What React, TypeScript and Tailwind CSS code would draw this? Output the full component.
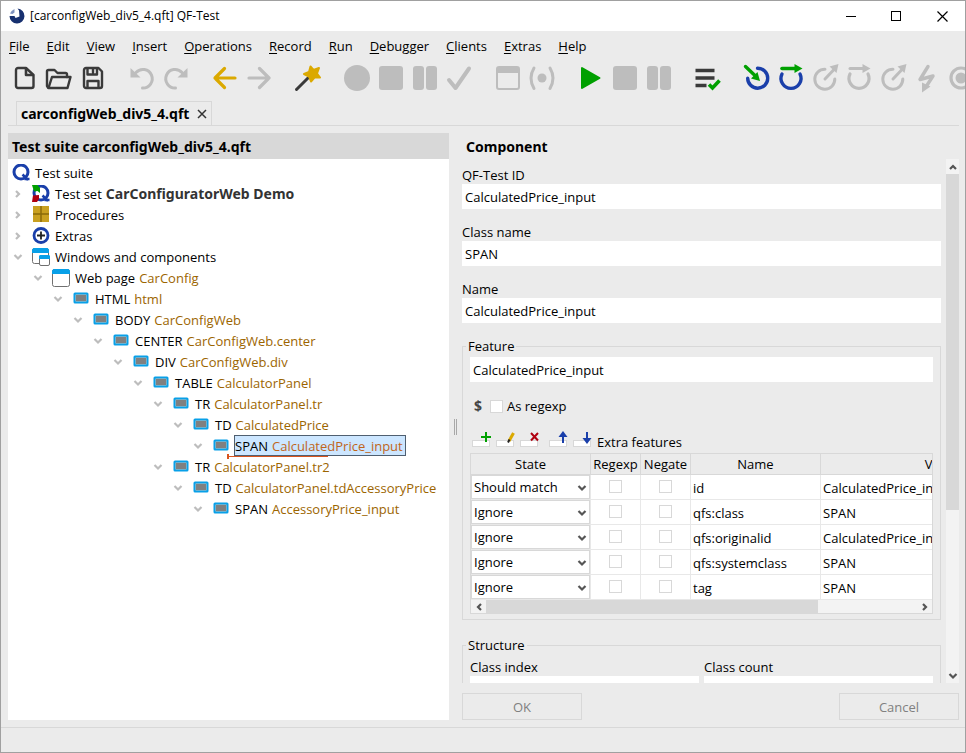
import { useState, type ReactNode } from 'react';

type NodeIcon = 'suite' | 'testset' | 'procedures' | 'extras' | 'windows' | 'page' | 'component';

interface TreeNode {
  level: number;
  icon: NodeIcon;
  label: string;
  detail?: string;
  open?: boolean;
}

const menus = ['File', 'Edit', 'View', 'Insert', 'Operations', 'Record', 'Run', 'Debugger', 'Clients', 'Extras', 'Help'];

const tree: TreeNode[] = [
  { level: 0, icon: 'suite', label: 'Test suite' },
  { level: 1, icon: 'testset', label: 'Test set', detail: 'CarConfiguratorWeb Demo', open: false },
  { level: 1, icon: 'procedures', label: 'Procedures', open: false },
  { level: 1, icon: 'extras', label: 'Extras', open: false },
  { level: 1, icon: 'windows', label: 'Windows and components', open: true },
  { level: 2, icon: 'page', label: 'Web page', detail: 'CarConfig', open: true },
  { level: 3, icon: 'component', label: 'HTML', detail: 'html', open: true },
  { level: 4, icon: 'component', label: 'BODY', detail: 'CarConfigWeb', open: true },
  { level: 5, icon: 'component', label: 'CENTER', detail: 'CarConfigWeb.center', open: true },
  { level: 6, icon: 'component', label: 'DIV', detail: 'CarConfigWeb.div', open: true },
  { level: 7, icon: 'component', label: 'TABLE', detail: 'CalculatorPanel', open: true },
  { level: 8, icon: 'component', label: 'TR', detail: 'CalculatorPanel.tr', open: true },
  { level: 9, icon: 'component', label: 'TD', detail: 'CalculatedPrice', open: true },
  { level: 10, icon: 'component', label: 'SPAN', detail: 'CalculatedPrice_input', open: true },
  { level: 8, icon: 'component', label: 'TR', detail: 'CalculatorPanel.tr2', open: true },
  { level: 9, icon: 'component', label: 'TD', detail: 'CalculatorPanel.tdAccessoryPrice', open: true },
  { level: 10, icon: 'component', label: 'SPAN', detail: 'AccessoryPrice_input', open: true },
];

const features = [
  { state: 'Should match', name: 'id', value: 'CalculatedPrice_input' },
  { state: 'Ignore', name: 'qfs:class', value: 'SPAN' },
  { state: 'Ignore', name: 'qfs:originalid', value: 'CalculatedPrice_input' },
  { state: 'Ignore', name: 'qfs:systemclass', value: 'SPAN' },
  { state: 'Ignore', name: 'tag', value: 'SPAN' },
];

const GRAY = '#bdbdbd';
const DARK = '#3a3a3a';
const GOLD = '#dba900';
const GREEN = '#00a000';
const BLUE = '#1a3faa';

const line = (color: string, width: number) => ({
  fill: 'none',
  stroke: color,
  strokeWidth: width,
  strokeLinecap: 'round' as const,
  strokeLinejoin: 'round' as const,
});

const stopIcon = <rect x="2" y="2" width="24" height="24" rx="3" fill={GRAY} />;
const pauseIcon = (
  <g fill={GRAY}>
    <rect x="2" y="2" width="11" height="24" rx="3" />
    <rect x="15" y="2" width="11" height="24" rx="3" />
  </g>
);
const stepOutIcon = (
  <g>
    <path d="M14 5.2a10 10 0 1 0 9.800 9.800" {...line(GRAY, 3)} />
    <path d="M14 15L23 5.500" {...line(GRAY, 3)} />
    <path d="M27.500 0L25.500 9L18.500 2.500Z" fill={GRAY} />
  </g>
);

const toolbar: { name: string; icon: ReactNode }[][] = [
  [
    {
      name: 'New',
      icon: (
        <g {...line(DARK, 2.4)}>
          <path d="M7 4h8l7.500 7V22a2 2 0 0 1-2 2H7a2 2 0 0 1-2-2V6a2 2 0 0 1 2-2z" />
          <path d="M15 4.500V11H22" strokeWidth="2.600" />
        </g>
      ),
    },
    {
      name: 'Open',
      icon: (
        <g {...line(DARK, 2.4)}>
          <path d="M3 23.500L2 22V7.500a1.500 1.500 0 0 1 1.500-1.500h6l3 3h8a1.500 1.500 0 0 1 1.500 1.500V13" />
          <path d="M7 13h18.500l-3 11H3.500z" />
        </g>
      ),
    },
    {
      name: 'Save',
      icon: (
        <g {...line(DARK, 2.4)}>
          <path d="M7 4h12.500l3.500 3.500V22a2 2 0 0 1-2 2H7a2 2 0 0 1-2-2V6a2 2 0 0 1 2-2z" />
          <path d="M8.500 4.500v6h9.500V4.500M14 4.500v4M8.500 23.500v-6.500h11v6.500" />
        </g>
      ),
    },
  ],
  [
    {
      name: 'Undo',
      icon: (
        <g>
          <path d="M8 8.500A9.300 9.300 0 1 1 14.500 24" {...line(GRAY, 3)} />
          <path d="M2.500 4V13.500H12.500Z" fill={GRAY} />
        </g>
      ),
    },
    {
      name: 'Redo',
      icon: (
        <g>
          <path d="M20 8.500A9.300 9.300 0 1 0 13.500 24" {...line(GRAY, 3)} />
          <path d="M25.500 4V13.500H15.500Z" fill={GRAY} />
        </g>
      ),
    },
  ],
  [
    { name: 'Back', icon: <path d="M24 14H4M13.500 4.500L4 14L13.500 23.500" {...line(GOLD, 3.2)} /> },
    { name: 'Forward', icon: <path d="M4 14H24M14.500 4.500L24 14L14.500 23.500" {...line(GRAY, 3.2)} /> },
  ],
  [
    {
      name: 'Wizard',
      icon: (
        <g>
          <path d="M2.500 25.500L14 14" {...line(DARK, 3)} />
          <path
            d="M16.500 2.500L19.500 6L25 4L23 9.500L26 13.500L20.500 13.500L17 17.500L15 12.500L10 10L15 8Z"
            fill={GOLD}
            stroke={GOLD}
            strokeWidth="2"
            strokeLinejoin="round"
          />
        </g>
      ),
    },
  ],
  [
    { name: 'Record', icon: <circle cx="14" cy="14" r="13" fill={GRAY} /> },
    { name: 'Stop recording', icon: stopIcon },
    { name: 'Pause recording', icon: pauseIcon },
    { name: 'Check', icon: <path d="M4 16L10.500 24L24 4.500" {...line(GRAY, 4)} /> },
  ],
  [
    {
      name: 'Record window',
      icon: (
        <g>
          <rect x="3" y="3" width="22" height="22" rx="2" fill="none" stroke={GRAY} strokeWidth="2" />
          <path d="M3 3h22v6H3z" fill={GRAY} />
        </g>
      ),
    },
    {
      name: 'Record component',
      icon: (
        <g>
          <circle cx="14" cy="14" r="4.500" fill={GRAY} />
          <path d="M6 4Q0 14 6 24.500M22 4Q28 14 22 24.500" {...line(GRAY, 3)} />
        </g>
      ),
    },
  ],
  [
    { name: 'Run', icon: <path d="M5 4v20L22.500 14z" fill={GREEN} stroke={GREEN} strokeWidth="2" strokeLinejoin="round" /> },
    { name: 'Stop run', icon: stopIcon },
    { name: 'Pause run', icon: pauseIcon },
  ],
  [
    {
      name: 'Run log',
      icon: (
        <g>
          <path d="M1.500 6.500h19M1.500 14h19M1.500 21.500h11" fill="none" stroke={DARK} strokeWidth="3.400" />
          <path d="M15 20.500L18.500 24L25.500 16.500" fill="none" stroke={GREEN} strokeWidth="3.600" />
        </g>
      ),
    },
  ],
  [
    {
      name: 'Step into',
      icon: (
        <g>
          <path d="M14.500 4.200a10 10 0 1 1-9.800 10" {...line(BLUE, 3.4)} />
          <path d="M2.500 2.500L13 12.500" {...line(GREEN, 3.4)} />
          <path d="M17 17L8 14.500L14.500 8Z" fill={GREEN} />
        </g>
      ),
    },
    {
      name: 'Step over',
      icon: (
        <g>
          <path d="M5 10a10 10 0 1 0 18 0" {...line(BLUE, 3.4)} />
          <path d="M5 4.500H18" {...line(GREEN, 3.6)} />
          <path d="M25.500 4.500L17.500 0V9Z" fill={GREEN} />
        </g>
      ),
    },
    { name: 'Step out', icon: stepOutIcon },
    {
      name: 'Skip over',
      icon: (
        <g>
          <path d="M5 10a10 10 0 1 0 18 0" {...line(GRAY, 3.2)} />
          <path d="M5 4.500H18" {...line(GRAY, 3)} />
          <path d="M25.500 4.500L17.500 0V9Z" fill={GRAY} />
        </g>
      ),
    },
    { name: 'Skip out', icon: stepOutIcon },
    {
      name: 'Break on exception',
      icon: (
        <g>
          <path d="M15 2.500L7 15.500L20 12L13.500 22" {...line(GRAY, 3.4)} />
          <path d="M9 28.500L9 18.500L17.500 22.500Z" fill={GRAY} />
        </g>
      ),
    },
    {
      name: 'Breakpoint',
      icon: (
        <g>
          <circle cx="14" cy="14" r="10" fill="none" stroke={GRAY} strokeWidth="3.200" />
          <circle cx="14" cy="14" r="5.500" fill={GRAY} />
        </g>
      ),
    },
  ],
];

function TreeIcon({ icon }: { icon: NodeIcon }) {
  if (icon === 'component') {
    return (
      <svg width="18" height="18" viewBox="0 0 18 18">
        <rect x="2.500" y="3.500" width="13" height="9" rx=".5" fill="#c9c4bf" stroke="#08a0e8" strokeWidth="2" />
        <rect x="4" y="5" width="10" height="6" fill="#808080" />
      </svg>
    );
  }
  if (icon === 'page') {
    return (
      <svg width="18" height="18" viewBox="0 0 18 18">
        <rect x=".5" y=".5" width="17" height="17" rx="2" fill="#fff" stroke="#707070" />
        <path d="M0 5V1.500L1.500 0h15L18 1.500V5z" fill="#08a0e8" />
      </svg>
    );
  }
  if (icon === 'windows') {
    return (
      <svg width="18" height="18" viewBox="0 0 18 18">
        <rect x=".5" y=".5" width="16" height="15" rx="2" fill="#fff" stroke="#707070" />
        <path d="M0 5V1.500L1.500 0h14L17 1.500V5z" fill="#08a0e8" />
        <rect x="7.500" y="7.500" width="10" height="10" rx="1.500" fill="#fff" stroke="#707070" />
        <path d="M7 11V8l1-1h9l1 1v3z" fill="#08a0e8" />
      </svg>
    );
  }
  if (icon === 'procedures') {
    return (
      <svg width="18" height="18" viewBox="0 0 18 18">
        <rect x="1" y="0" width="16" height="16" fill="#c9a020" />
        <path d="M9 0V16M1 8H17" stroke="#8a6a08" strokeWidth="1.500" />
      </svg>
    );
  }
  if (icon === 'extras') {
    return (
      <svg width="18" height="18" viewBox="0 0 18 18">
        <circle cx="9" cy="8.500" r="7" fill="#fff" stroke={BLUE} strokeWidth="2.800" />
        <path d="M9 4.500V12.500M5 8.500H13" stroke="#222" strokeWidth="1.800" />
      </svg>
    );
  }
  return (
    <svg width="18" height="18" viewBox="0 0 18 18">
      <circle cx="9" cy="8" r="7" fill="none" stroke={BLUE} strokeWidth="3" />
      <path d="M10.500 10.500L16 16M12.500 15h5" stroke={BLUE} strokeWidth="2.500" />
      {icon === 'testset' && (
        <g>
          <path d="M0 0h5.500L8 3v5L5.500 6L2 6.500Z" fill={GREEN} />
          <path d="M1 10.500L7 10V14L5 17H0Z" fill="#b00010" />
        </g>
      )}
    </svg>
  );
}

function Arrow({ dir, className }: { dir: 'up' | 'down' | 'left' | 'right'; className?: string }) {
  const paths = {
    up: 'M2 7L5 4L8 7',
    down: 'M1.500 3L5 6.500L8.500 3',
    left: 'M7 2L4 5L7 8',
    right: 'M3 2L6 5L3 8',
  };
  return (
    <svg width="10" height="10" viewBox="0 0 10 10" className={className}>
      <path d={paths[dir]} fill="none" stroke="currentColor" strokeWidth="2.200" />
    </svg>
  );
}

function TitleBar() {
  return (
    <header className="flex h-[30px] shrink-0 items-center bg-white pl-2">
      <svg width="16" height="16" viewBox="0 0 16 16">
        <path d="M8.500 0.500A7.500 7.500 0 1 1 0.500 8H5.500L6.500 10L10.500 8.500L10 2.500Z" fill="#17306f" />
        <path d="M1 5.500Q2 2.500 5.500 1V4.500L3.500 6Z" fill="#7f93c0" />
      </svg>
      <h1 className="ml-[5px] flex-1 text-xs">[carconfigWeb_div5_4.qft] QF-Test</h1>
      <button aria-label="Minimize" className="flex h-full w-[46px] items-center justify-center">
        <svg width="11" height="11"><path d="M0 5.500H10" stroke="#000" /></svg>
      </button>
      <button aria-label="Maximize" className="flex h-full w-[45px] items-center justify-center">
        <svg width="11" height="11"><rect x=".5" y=".5" width="9" height="9" fill="none" stroke="#000" /></svg>
      </button>
      <button aria-label="Close" className="flex h-full w-[46px] items-center justify-center">
        <svg width="11" height="11"><path d="M.5.5L10.500 10.500M10.500.5L.5 10.500" stroke="#000" strokeWidth="1.200" /></svg>
      </button>
    </header>
  );
}

function Toolbar() {
  return (
    <div className="flex h-[34px] shrink-0 gap-[15px] overflow-hidden pl-[7px]">
      {toolbar.map((group, i) => (
        <div key={i} className="flex">
          {group.map((tool) => (
            <button key={tool.name} aria-label={tool.name} className="flex w-[34px] shrink-0 items-center justify-center">
              <svg width="28" height="28" viewBox="0 0 28 28" className="overflow-visible">
                {tool.icon}
              </svg>
            </button>
          ))}
        </div>
      ))}
    </div>
  );
}

function SuiteTree() {
  const [selected, setSelected] = useState(13);

  return (
    <section className="flex w-[441px] shrink-0 flex-col bg-white">
      <h2 className="flex h-[26px] items-center bg-[#d8d8d8] px-1 pt-0.5 font-['Noto_Sans',sans-serif] text-sm font-bold">
        Test suite carconfigWeb_div5_4.qft
      </h2>
      <ul className="pt-[3px]">
        {tree.map((node, i) => (
          <li key={i} className="flex h-[21px] items-center" style={{ paddingLeft: Math.max(node.level - 1, 0) * 20 }}>
            {node.level > 0 && (
              <span className="flex w-5 justify-center text-[#bdbdbd]">
                <Arrow dir={node.open ? 'down' : 'right'} />
              </span>
            )}
            <span className="flex w-[26px] justify-center">
              <TreeIcon icon={node.icon} />
            </span>
            <button
              onClick={() => setSelected(i)}
              className={`relative flex h-[21px] items-center gap-1 border whitespace-pre ${
                i === selected ? 'border-[#4f5f70] bg-[#cce6ff] pr-0.5' : 'border-transparent'
              }`}
            >
              {node.label}
              {node.detail && (
                <span
                  className={
                    node.icon === 'testset'
                      ? "font-['Noto_Sans',sans-serif] text-sm font-bold text-[#333]"
                      : i === selected
                        ? 'text-[#c0651a]'
                        : 'text-[#9c6500]'
                  }
                >
                  {node.detail}
                </span>
              )}
              {i === selected && (
                <span className="absolute -bottom-[2px] -left-2 h-px w-[101px] bg-[#d9541e]">
                  <span className="absolute -top-[2px] left-0 h-[5px] w-0.5 bg-[#d9541e]" />
                </span>
              )}
            </button>
          </li>
        ))}
      </ul>
    </section>
  );
}

function Field({ id, label, value = '' }: { id: string; label: string; value?: string }) {
  return (
    <div className="flex flex-col">
      <label htmlFor={id} className="h-[18px] leading-[18px]">{label}</label>
      <input id={id} defaultValue={value} className="h-[25px] w-full bg-white px-[3px] outline-none" />
    </div>
  );
}

function Check({ id, label }: { id?: string; label?: string }) {
  return (
    <input
      id={id}
      type="checkbox"
      aria-label={label}
      className="block h-[13px] w-[13px] shrink-0 appearance-none border border-[#d8d8d8] bg-white checked:bg-[#1a3faa]"
    />
  );
}

function RowButton({ label, children }: { label: string; children: ReactNode }) {
  return (
    <button aria-label={label} className="w-6">
      <svg width="24" height="22" viewBox="0 0 24 22">
        <rect x="2.500" y="9.500" width="17" height="6" fill="#fff" stroke="#d8d8d8" />
        {children}
      </svg>
    </button>
  );
}

function FeatureTable() {
  return (
    <div className="border border-[#d8d8d8]">
      <div className="overflow-hidden bg-white">
        <table className="w-[592px] table-fixed border-separate border-spacing-0">
          <colgroup>
            <col className="w-[120px]" />
            <col className="w-[50px]" />
            <col className="w-[50px]" />
            <col className="w-[130px]" />
            <col />
          </colgroup>
          <thead>
            <tr className="bg-[#ebebeb]">
              {['State', 'Regexp', 'Negate', 'Name', 'Value'].map((head) => (
                <th key={head} className="h-[21px] border-r border-b border-[#d8d8d8] p-0 leading-5 font-normal">{head}</th>
              ))}
            </tr>
          </thead>
          <tbody>
            {features.map((row) => (
              <tr key={row.name}>
                <td className="h-[25px] border-r border-b border-[#e8e8e8] p-0">
                  <div className="relative">
                    <select
                      aria-label={`State of ${row.name}`}
                      defaultValue={row.state}
                      className="block h-6 w-full appearance-none border border-[#d8d8d8] bg-white pl-[2px] outline-none"
                    >
                      <option>Should match</option>
                      <option>Ignore</option>
                    </select>
                    <Arrow dir="down" className="pointer-events-none absolute top-2 right-[3px] text-[#555]" />
                  </div>
                </td>
                <td className="border-r border-b border-[#e8e8e8] p-0">
                  <div className="flex justify-center pb-0.5"><Check label={`Regexp ${row.name}`} /></div>
                </td>
                <td className="border-r border-b border-[#e8e8e8] p-0">
                  <div className="flex justify-center pb-0.5"><Check label={`Negate ${row.name}`} /></div>
                </td>
                <td className="border-r border-b border-[#e8e8e8] p-0 pt-0.5 pl-0.5 leading-5">{row.name}</td>
                <td className="border-b border-[#e8e8e8] p-0 pt-0.5 pl-0.5 leading-5">{row.value}</td>
              </tr>
            ))}
          </tbody>
        </table>
      </div>
      <div className="flex h-[13px] bg-[#f3f3f3] text-[#555]">
        <button aria-label="Scroll left" className="flex w-[15px] items-center justify-center"><Arrow dir="left" /></button>
        <div className="flex-1"><div className="h-full w-[77%] bg-[#d8d8d8]" /></div>
        <button aria-label="Scroll right" className="flex w-[15px] items-center justify-center"><Arrow dir="right" /></button>
      </div>
    </div>
  );
}

function ComponentForm() {
  return (
    <section className="flex min-w-0 flex-1 flex-col">
      <h2 className="flex h-[26px] shrink-0 items-center px-1 pt-0.5 font-['Noto_Sans',sans-serif] text-sm font-bold">
        Component
      </h2>
      <div className="flex min-h-0 flex-1 gap-[5px]">
        <form className="flex min-w-0 flex-1 flex-col gap-3.5 overflow-hidden pt-[7px]">
          <Field id="qft-id" label="QF-Test ID" value="CalculatedPrice_input" />
          <Field id="class-name" label="Class name" value="SPAN" />
          <Field id="name" label="Name" value="CalculatedPrice_input" />

          <fieldset className="min-w-0 shrink-0 border border-[#d8d8d8] px-[7px] pt-0.5 pb-[5px]">
            <legend className="-ml-1 px-0.5 leading-[18px]">Feature</legend>
            <input
              aria-label="Feature"
              defaultValue="CalculatedPrice_input"
              className="block h-[25px] w-full bg-white px-[3px] outline-none"
            />
            <div className="mt-3.5 flex h-5 items-center pl-1">
              <span className="w-4 text-sm font-bold text-[#444]">$</span>
              <Check id="as-regexp" />
              <label htmlFor="as-regexp" className="pl-1">As regexp</label>
            </div>
            <div className="mt-3.5 flex h-[23px] items-center">
              <RowButton label="Add row">
                <path d="M16 1V11M11 6H21" stroke={GREEN} strokeWidth="2" />
              </RowButton>
              <RowButton label="Edit row">
                <path d="M19.500 2L15 10" stroke={GOLD} strokeWidth="3" />
                <path d="M15.500 8.500L14 11.500" stroke="#222" strokeWidth="2" />
              </RowButton>
              <RowButton label="Delete row">
                <path d="M13 2L20 9.500M20 2L13 9.500" stroke="#b00010" strokeWidth="2" />
              </RowButton>
              <span className="w-[5px]" />
              <RowButton label="Move up">
                <path d="M16 12V4" stroke={BLUE} strokeWidth="2" />
                <path d="M16 0L20.500 6H11.500Z" fill={BLUE} />
              </RowButton>
              <RowButton label="Move down">
                <path d="M16 1V9" stroke={BLUE} strokeWidth="2" />
                <path d="M16 13L20.500 7H11.500Z" fill={BLUE} />
              </RowButton>
              <span className="pl-0.5">Extra features</span>
            </div>
            <FeatureTable />
          </fieldset>

          <fieldset className="mt-0.5 min-w-0 shrink-0 border border-[#d8d8d8] px-[7px] pt-1 pb-2">
            <legend className="-ml-1 px-0.5 leading-[18px]">Structure</legend>
            <div className="grid grid-cols-2 gap-[5px]">
              <Field id="class-index" label="Class index" />
              <Field id="class-count" label="Class count" />
            </div>
          </fieldset>
        </form>
        <div className="flex w-[13px] flex-col bg-[#f3f3f3] text-[#555]">
          <button aria-label="Scroll up" className="flex h-[15px] items-center justify-center"><Arrow dir="up" /></button>
          <div className="flex-1"><div className="h-[68%] bg-[#d8d8d8]" /></div>
          <button aria-label="Scroll down" className="flex h-[15px] items-center justify-center"><Arrow dir="down" /></button>
        </div>
      </div>
      <div className="flex shrink-0 justify-between pt-2.5 text-[#808080]">
        <button className="h-[27px] w-[120px] border border-[#d8d8d8]">OK</button>
        <button className="h-[27px] w-[120px] border border-[#d8d8d8]">Cancel</button>
      </div>
    </section>
  );
}

export default function App() {
  return (
    <div className="flex h-screen flex-col overflow-hidden border border-[#a0a0a0] bg-[#ebebeb] font-['Open_Sans','Noto_Sans',sans-serif] text-[13px] leading-[18px] text-black">
      <TitleBar />
      <nav className="flex h-[30px] shrink-0 items-center gap-[17px] pl-2">
        {menus.map((menu) => (
          <button key={menu}>
            <span className="underline underline-offset-2">{menu[0]}</span>
            {menu.slice(1)}
          </button>
        ))}
      </nav>
      <Toolbar />
      <div className="mr-1.5 ml-[7px] mt-1.5 flex shrink-0 border-b border-[#d8d8d8] pl-2">
        <div className="flex h-6 items-center gap-2 border border-b-0 border-[#d8d8d8] px-1">
          <span className="font-['Noto_Sans',sans-serif] text-sm font-bold">carconfigWeb_div5_4.qft</span>
          <button aria-label="Close tab">
            <svg width="10" height="10"><path d="M1 1L9 9M9 1L1 9" stroke="#333" strokeWidth="1.500" /></svg>
          </button>
        </div>
      </div>
      <main className="flex min-h-0 flex-1 py-[7px] pr-1.5 pl-[7px]">
        <SuiteTree />
        <div className="flex w-[13px] shrink-0 items-center justify-center">
          <div className="h-4 w-[3px] border-x border-[#a8a8a8]" />
        </div>
        <ComponentForm />
      </main>
      <footer className="h-[25px] shrink-0 border-t border-[#d8d8d8]" />
    </div>
  );
}
